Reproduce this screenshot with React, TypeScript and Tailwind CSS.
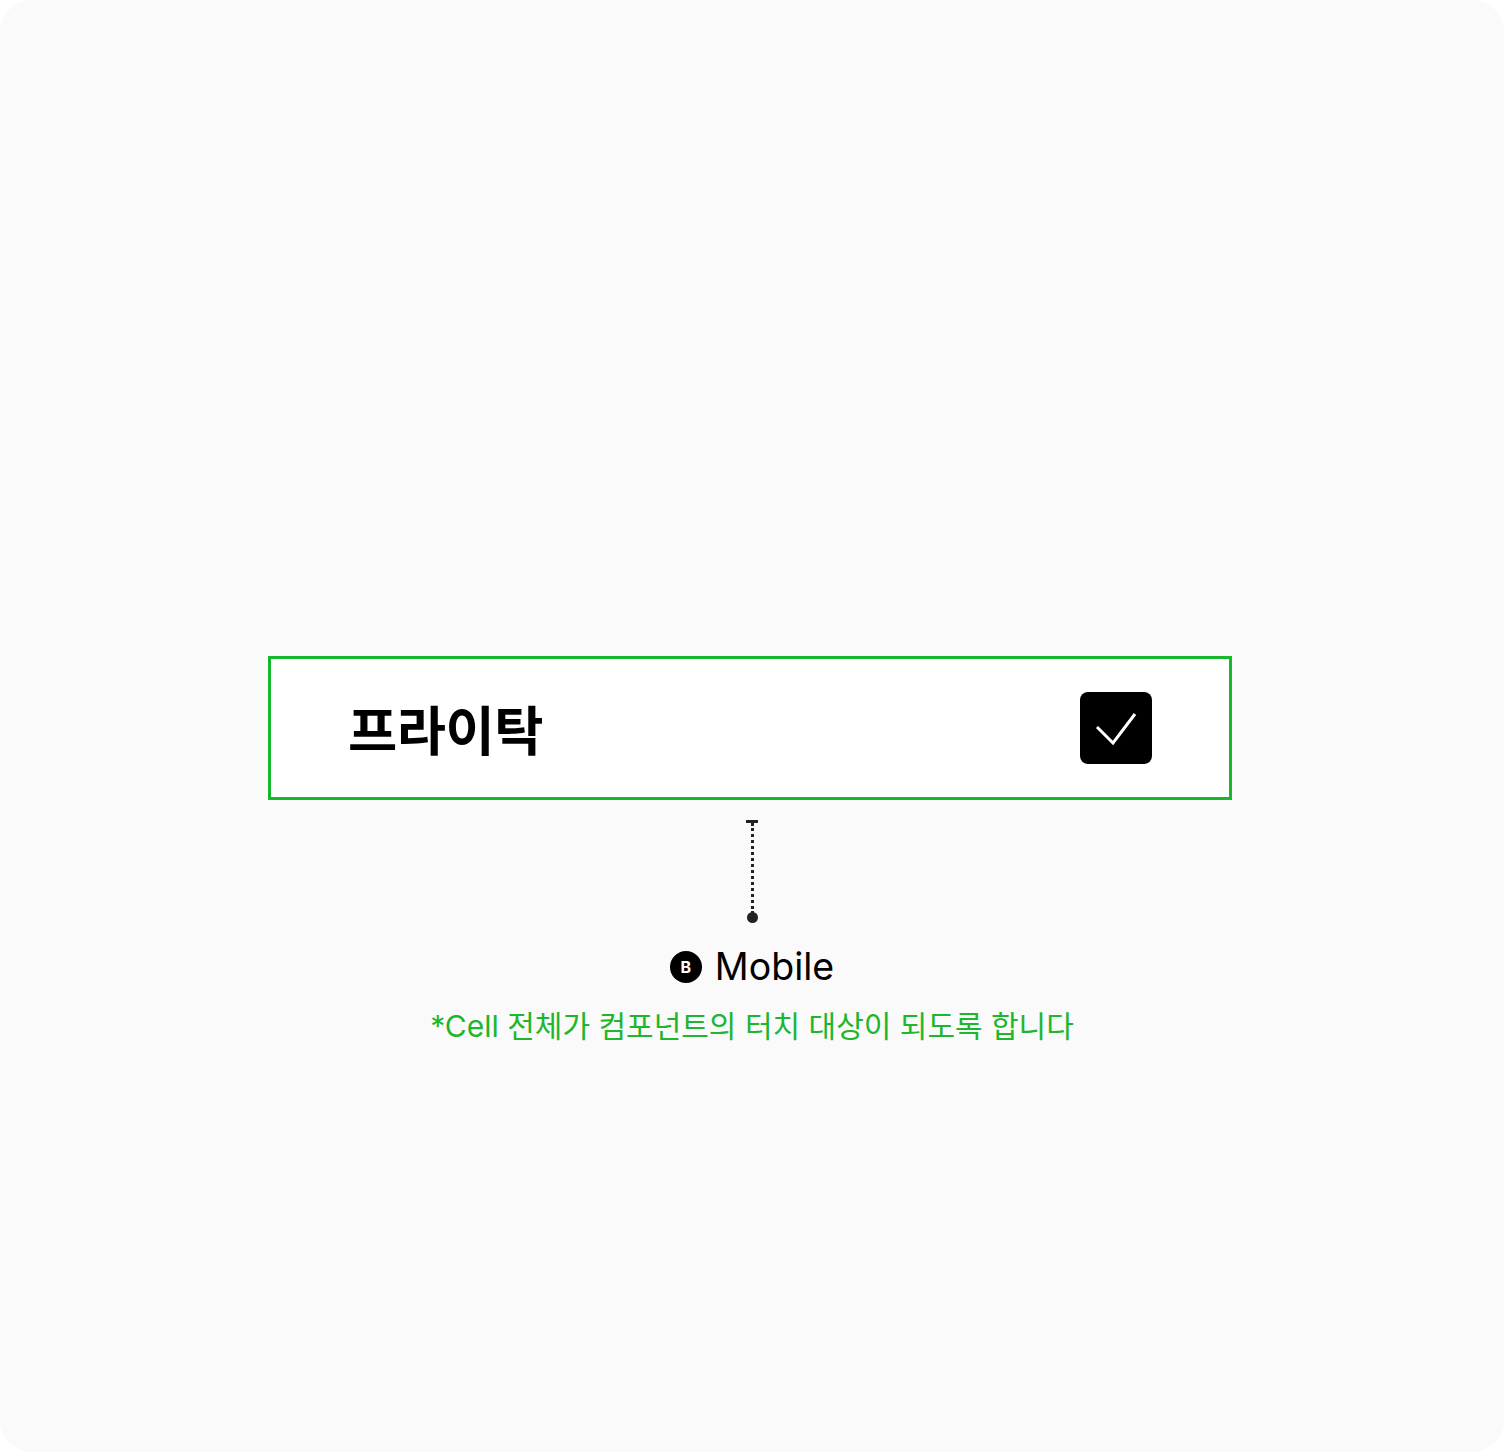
import React from 'react';

const App: React.FC = () => {
    return (
        <div className="w-[1504px] h-[1452px] bg-white">
            <div
                className="w-full h-full rounded-[32px] bg-[#fafafa] flex flex-col items-center pt-[656px]"
                style={{ fontFamily: 'Inter, "Noto Sans CJK KR", sans-serif' }}
            >
                {/* Cell */}
                <div className="w-[964px] h-[144px] mr-[4px] border-[3px] border-[#17b82b] bg-white flex items-center justify-between pl-[77px] pr-[77px]">
                    <span
                        className="text-[53.5px] font-bold text-black leading-none tracking-[-0.5px]"
                        style={{ fontFamily: '"Noto Sans CJK KR", sans-serif' }}
                    >
                        프라이탁
                    </span>
                    <div className="w-[72px] h-[72px] rounded-[8px] bg-black">
                        <svg width="72" height="72" viewBox="0 0 72 72" fill="none">
                            <path d="M17 35 L33 51 L55 22" stroke="white" strokeWidth="3" strokeLinecap="butt" strokeLinejoin="miter" />
                        </svg>
                    </div>
                </div>

                {/* Connector */}
                <div className="mt-[20px] flex flex-col items-center">
                    <div className="w-3 h-[3px] bg-[#222]" />
                    <div className="w-0 h-[91px] border-l-[3px] border-dotted border-[#222]" />
                    <div className="w-[11px] h-[11px] rounded-full bg-[#222] -mt-[2px]" />
                </div>

                {/* Label */}
                <div className="mt-[24px] flex items-center gap-[13px]">
                    <div className="w-[32px] h-[32px] rounded-full bg-black text-white flex items-center justify-center text-[16px] font-bold">
                        B
                    </div>
                    <span className="text-[37.5px] text-black leading-[40px]">Mobile</span>
                </div>

                <p className="mt-[20px] text-[30px] text-[#1db62c] leading-[38px]">
                    *Cell 전체가 컴포넌트의 터치 대상이 되도록 합니다
                </p>
            </div>
        </div>
    );
};

export default App;
